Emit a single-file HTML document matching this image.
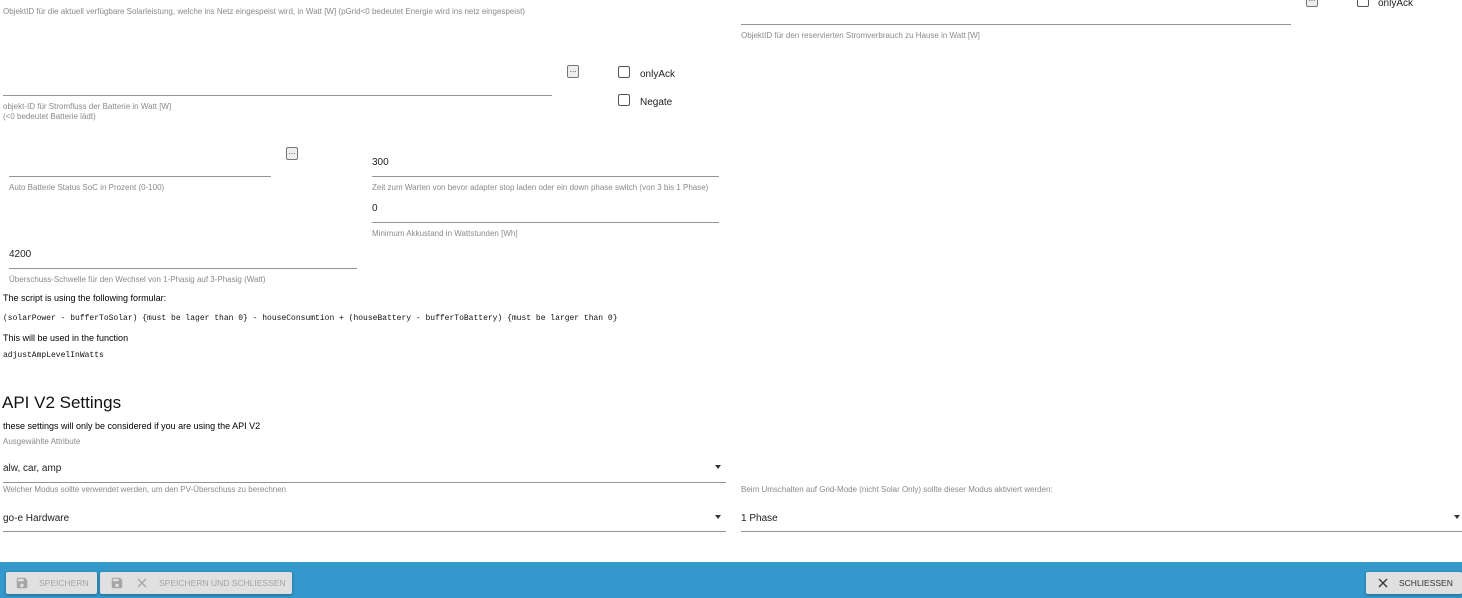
<!DOCTYPE html>
<html><head><meta charset="utf-8"><style>
*{margin:0;padding:0;box-sizing:border-box}
body{width:1462px;height:598px;overflow:hidden;background:#fff;font-family:"Liberation Sans",sans-serif;position:relative}
.a{position:absolute;white-space:nowrap}
.lb{font-size:8px;color:#8a8a8a}
.v{font-size:10px;color:#222}
.ln{position:absolute;height:1px;background:#949494}
.bt{position:absolute;width:12px;height:13px;border:1px solid #777;border-radius:2px;background:#eee;font-size:8px;line-height:8px;text-align:center;color:#333}
.cb{position:absolute;width:12px;height:12px;border:1px solid #555;border-radius:2px;background:#fff}
.m{font-family:"Liberation Mono",monospace;font-size:8px;color:#111}
.arr{position:absolute;width:0;height:0;border-left:3.5px solid transparent;border-right:3.5px solid transparent;border-top:4px solid #333}
.fb{position:absolute;top:572px;height:22px;background:#e0e0e0;box-shadow:0 1px 3px rgba(0,0,0,.35);border-radius:2px;font-size:8.5px;color:#a5a5a5;line-height:22px}
</style></head><body>
<div class="a lb" style="left:3px;top:7px">ObjektID für die aktuell verfügbare Solarleistung, welche ins Netz eingespeist wird, in Watt [W] (pGrid&lt;0 bedeutet Energie wird ins netz eingespeist)</div>
<div class="ln" style="left:741px;top:24px;width:550px"></div>
<div class="a lb" style="left:741px;top:31px">ObjektID für den reservierten Stromverbrauch zu Hause in Watt [W]</div>
<div class="bt" style="left:1306px;top:-6px">...</div>
<div class="cb" style="left:1357px;top:-5px"></div>
<div class="a v" style="left:1378px;top:-2px">onlyAck</div>

<div class="ln" style="left:3px;top:95px;width:549px"></div>
<div class="a lb" style="left:3px;top:102px;line-height:10px">objekt-ID für Stromfluss der Batterie in Watt [W]<br>(&lt;0 bedeutet Batterie lädt)</div>
<div class="bt" style="left:567px;top:65px">...</div>
<div class="cb" style="left:618px;top:66px"></div>
<div class="a v" style="left:640px;top:69px">onlyAck</div>
<div class="cb" style="left:618px;top:94px"></div>
<div class="a v" style="left:640px;top:97px">Negate</div>

<div class="ln" style="left:9px;top:176px;width:262px"></div>
<div class="bt" style="left:286px;top:147px">...</div>
<div class="a lb" style="left:9px;top:183px">Auto Batterie Status SoC in Prozent (0-100)</div>
<div class="a v" style="left:372px;top:157px">300</div>
<div class="ln" style="left:372px;top:176px;width:347px"></div>
<div class="a lb" style="left:372px;top:183px">Zeit zum Warten von bevor adapter stop laden oder ein down phase switch (von 3 bis 1 Phase)</div>
<div class="a v" style="left:372px;top:203px">0</div>
<div class="ln" style="left:372px;top:222px;width:347px"></div>
<div class="a lb" style="left:372px;top:229px">Minimum Akkustand in Wattstunden [Wh]</div>
<div class="a v" style="left:9px;top:249px">4200</div>
<div class="ln" style="left:9px;top:268px;width:348px"></div>
<div class="a lb" style="left:9px;top:275px">Überschuss-Schwelle für den Wechsel von 1-Phasig auf 3-Phasig (Watt)</div>

<div class="a" style="left:3px;top:293px;font-size:9px;color:#000">The script is using the following formular:</div>
<div class="a m" style="left:3px;top:314px">(solarPower - bufferToSolar) {must be lager than 0} - houseConsumtion + (houseBattery - bufferToBattery) {must be larger than 0}</div>
<div class="a" style="left:3px;top:333px;font-size:9px;color:#000">This will be used in the function</div>
<div class="a m" style="left:3px;top:351px">adjustAmpLevelInWatts</div>

<div class="a" style="left:2px;top:393px;font-size:17px;color:#111">API V2 Settings</div>
<div class="a" style="left:3px;top:421px;font-size:9px;color:#000">these settings will only be considered if you are using the API V2</div>
<div class="a lb" style="left:3px;top:437px">Ausgewählte Attribute</div>
<div class="a v" style="left:3px;top:463px">alw, car, amp</div>
<div class="arr" style="left:715px;top:465px"></div>
<div class="ln" style="left:3px;top:482px;width:723px"></div>
<div class="a lb" style="left:3px;top:485px">Welcher Modus sollte verwendet werden, um den PV-Überschuss zu berechnen</div>
<div class="a lb" style="left:741px;top:485px">Beim Umschalten auf Grid-Mode (nicht Solar Only) sollte dieser Modus aktiviert werden:</div>
<div class="a v" style="left:3px;top:513px">go-e Hardware</div>
<div class="arr" style="left:715px;top:515px"></div>
<div class="ln" style="left:3px;top:531px;width:723px"></div>
<div class="a v" style="left:741px;top:513px">1 Phase</div>
<div class="arr" style="left:1454px;top:515px"></div>
<div class="ln" style="left:741px;top:531px;width:721px"></div>

<div style="position:absolute;left:0;top:562px;width:1462px;height:36px;background:#3399cc"></div>
<div class="fb" style="left:6px;width:91px">
<svg style="position:absolute;left:9px;top:4px" width="14" height="14" viewBox="0 0 24 24"><path fill="#a5a5a5" d="M17 3H5a2 2 0 0 0-2 2v14a2 2 0 0 0 2 2h14a2 2 0 0 0 2-2V7l-4-4zm-5 16a3 3 0 1 1 0-6 3 3 0 0 1 0 6zm3-10H5V5h10v4z"/></svg>
<span style="position:absolute;left:33px">SPEICHERN</span></div>
<div class="fb" style="left:100px;width:192px">
<svg style="position:absolute;left:10px;top:4px" width="14" height="14" viewBox="0 0 24 24"><path fill="#a5a5a5" d="M17 3H5a2 2 0 0 0-2 2v14a2 2 0 0 0 2 2h14a2 2 0 0 0 2-2V7l-4-4zm-5 16a3 3 0 1 1 0-6 3 3 0 0 1 0 6zm3-10H5V5h10v4z"/></svg>
<svg style="position:absolute;left:37px;top:6px" width="10" height="10" viewBox="0 0 10 10"><path d="M1 1L9 9M9 1L1 9" stroke="#a5a5a5" stroke-width="1.3"/></svg>
<span style="position:absolute;left:59px">SPEICHERN UND SCHLIESSEN</span></div>
<div class="fb" style="left:1366px;width:96px;color:#333">
<svg style="position:absolute;left:12px;top:6px" width="10" height="10" viewBox="0 0 10 10"><path d="M1 1L9 9M9 1L1 9" stroke="#333" stroke-width="1.3"/></svg>
<span style="position:absolute;left:33px">SCHLIESSEN</span></div>
</body></html>
